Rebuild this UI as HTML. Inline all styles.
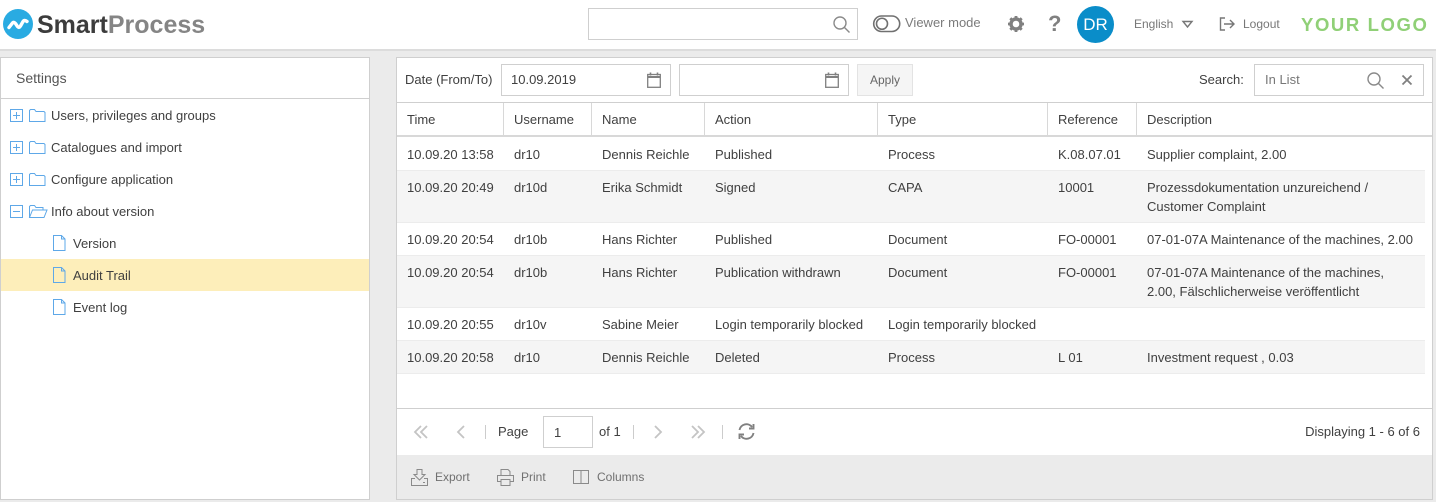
<!DOCTYPE html>
<html><head><meta charset="utf-8"><style>
html,body{margin:0;padding:0;width:1436px;height:502px;overflow:hidden;background:#ebebeb}
body{position:relative;font-family:"Liberation Sans",sans-serif;font-size:13px;color:#404040}
.a{position:absolute}
.t{position:absolute;white-space:nowrap;line-height:16px}
.b{position:absolute;box-sizing:border-box;border:1px solid #cfcfcf;background:#fff}
svg{position:absolute;overflow:visible}
.g{color:#707070}
.tc{position:absolute;white-space:nowrap;line-height:19px;color:#404040;font-size:13px}
</style></head><body>
<!-- top bar -->
<div class="a" style="left:0;top:0;width:1436px;height:49px;background:#fff"></div>
<div class="a" style="left:0;top:49px;width:1436px;height:2px;background:#dcdcdc"></div>
<svg style="left:3px;top:9px" width="30" height="30" viewBox="0 0 30 30"><circle cx="15" cy="15" r="15" fill="#29abe2"/><path d="M6 18.500 L9.500 14 Q11 12.500 12.500 14.500 L14.500 17.500 Q16 19.500 17.500 17 L20 12.500 Q21.500 10.500 24 12.500" fill="none" stroke="#fff" stroke-width="3.400" stroke-linecap="round"/></svg>
<div class="t" style="left:37px;top:10px;font-size:25px;line-height:30px;font-weight:bold;color:#3c3c3c;letter-spacing:0">Smart<span style="color:#858585">Process</span></div>

<div class="b" style="left:588px;top:8px;width:270px;height:32px"></div>
<svg style="left:833px;top:16px" width="17" height="17" viewBox="0 0 17 17" fill="none" stroke="#8a8a8a" stroke-width="1.400"><circle cx="7" cy="7" r="6"/><path d="M11.500 11.500l5 5"/></svg>
<svg style="left:873px;top:15px" width="28" height="18" viewBox="0 0 28 18" fill="none" stroke="#707070" stroke-width="1.600"><rect x=".7" y="1" width="26" height="15.500" rx="7.750"/><circle cx="9" cy="8.750" r="5.500"/></svg>
<div class="t g" style="left:905px;top:15px;color:#7b7b7b">Viewer mode</div>
<svg style="left:1008px;top:16px" width="16" height="16" viewBox="0 0 16 16"><circle cx="8" cy="8" r="5" fill="none" stroke="#808080" stroke-width="3.400"/><g stroke="#808080" stroke-width="2.800"><path d="M8 0v3M8 13v3M0 8h3M13 8h3M2.300 2.300l2.100 2.100M11.600 11.600l2.100 2.100M2.300 13.700l2.100-2.100M11.600 4.400l2.100-2.100"/></g></svg>
<div class="t" style="left:1048px;top:12px;font-size:22px;line-height:24px;font-weight:bold;color:#808080">?</div>
<div class="a" style="left:1077px;top:6px;width:37px;height:37px;border-radius:50%;background:#0a8dc9;color:#fff;font-size:17px;line-height:37px;text-align:center">DR</div>
<div class="t" style="left:1134px;top:16px;font-size:12px;color:#777">English</div>
<svg style="left:1182px;top:20px" width="11" height="9" viewBox="0 0 11 9" fill="none" stroke="#777" stroke-width="1.400"><path d="M1 1.500h9L5.500 7z"/></svg>
<svg style="left:1219px;top:17px" width="17" height="14" viewBox="0 0 17 14" fill="none" stroke="#777" stroke-width="1.400"><path d="M6 1H1.500v12H6M5 7h10M11 3l4 4-4 4"/></svg>
<div class="t" style="left:1243px;top:16px;font-size:12px;color:#777">Logout</div>
<div class="t" style="left:1301px;top:13px;font-size:18.500px;line-height:24px;font-weight:bold;color:#90d077;letter-spacing:1.600px">YOUR LOGO</div>

<!-- left panel -->
<div class="b" style="left:0;top:57px;width:370px;height:443px"></div>
<div class="a" style="left:1px;top:98px;width:368px;height:1px;background:#cfcfcf"></div>
<div class="t" style="left:16px;top:70px;font-size:14px;color:#555">Settings</div>
<svg style="left:10px;top:109px" width="14" height="14" viewBox="0 0 14 14" fill="none" stroke="#5ea8e8"><rect x=".5" y=".5" width="12" height="12"/><path d="M3 6.500h7M6.500 3v7"/></svg>
<svg style="left:29px;top:109px" width="17" height="13" viewBox="0 0 17 13" fill="none" stroke="#5ea8e8"><path d="M.5 12.500V1.500l1-1h4l1.500 2h8l1 1v9z"/></svg>
<div class="t" style="left:51px;top:108px">Users, privileges and groups</div>
<svg style="left:10px;top:141px" width="14" height="14" viewBox="0 0 14 14" fill="none" stroke="#5ea8e8"><rect x=".5" y=".5" width="12" height="12"/><path d="M3 6.500h7M6.500 3v7"/></svg>
<svg style="left:29px;top:141px" width="17" height="13" viewBox="0 0 17 13" fill="none" stroke="#5ea8e8"><path d="M.5 12.500V1.500l1-1h4l1.500 2h8l1 1v9z"/></svg>
<div class="t" style="left:51px;top:140px">Catalogues and import</div>
<svg style="left:10px;top:173px" width="14" height="14" viewBox="0 0 14 14" fill="none" stroke="#5ea8e8"><rect x=".5" y=".5" width="12" height="12"/><path d="M3 6.500h7M6.500 3v7"/></svg>
<svg style="left:29px;top:173px" width="17" height="13" viewBox="0 0 17 13" fill="none" stroke="#5ea8e8"><path d="M.5 12.500V1.500l1-1h4l1.500 2h8l1 1v9z"/></svg>
<div class="t" style="left:51px;top:172px">Configure application</div>
<svg style="left:10px;top:205px" width="14" height="14" viewBox="0 0 14 14" fill="none" stroke="#5ea8e8"><rect x=".5" y=".5" width="12" height="12"/><path d="M3 6.500h7"/></svg>
<svg style="left:29px;top:205px" width="19" height="13" viewBox="0 0 19 13" fill="none" stroke="#5ea8e8"><path d="M.5 12.500V1.500l1-1h4l1.500 2h7v2.500M.5 12.500l3-7.500h14.500l-3 7.500z"/></svg>
<div class="t" style="left:51px;top:204px">Info about version</div>
<div class="a" style="left:1px;top:259px;width:368px;height:32px;background:#fdeeba"></div>
<svg style="left:53px;top:235px" width="13" height="16" viewBox="0 0 13 16" fill="none" stroke="#5ea8e8"><path d="M.5.500h8l3.500 3.500v11.500H.5zM8.500.500V4H12"/></svg>
<div class="t" style="left:73px;top:236px">Version</div>
<svg style="left:53px;top:267px" width="13" height="16" viewBox="0 0 13 16" fill="none" stroke="#5ea8e8"><path d="M.5.500h8l3.500 3.500v11.500H.5zM8.500.500V4H12"/></svg>
<div class="t" style="left:73px;top:268px">Audit Trail</div>
<svg style="left:53px;top:299px" width="13" height="16" viewBox="0 0 13 16" fill="none" stroke="#5ea8e8"><path d="M.5.500h8l3.500 3.500v11.500H.5zM8.500.500V4H12"/></svg>
<div class="t" style="left:73px;top:300px">Event log</div>

<!-- right panel -->
<div class="b" style="left:396px;top:57px;width:1037px;height:443px"></div>
<div class="t" style="left:405px;top:72px">Date (From/To)</div>
<div class="b" style="left:501px;top:64px;width:170px;height:32px"></div>
<div class="t" style="left:511px;top:72px">10.09.2019</div>
<svg style="left:647px;top:72px" width="14" height="16" viewBox="0 0 14 16" fill="none" stroke="#808080" stroke-width="1.300"><rect x=".7" y="2.500" width="12.600" height="12.800"/><path d="M.7 5h12.600" stroke-width="2"/><path d="M3.500.5v3M10.500.5v3" stroke-width="1.600"/></svg>
<div class="b" style="left:679px;top:64px;width:170px;height:32px"></div>
<svg style="left:825px;top:72px" width="14" height="16" viewBox="0 0 14 16" fill="none" stroke="#808080" stroke-width="1.300"><rect x=".7" y="2.500" width="12.600" height="12.800"/><path d="M.7 5h12.600" stroke-width="2"/><path d="M3.500.5v3M10.500.5v3" stroke-width="1.600"/></svg>
<div class="b" style="left:857px;top:64px;width:56px;height:32px;background:#f5f5f5;border-color:#e3e3e3"></div>
<div class="t" style="left:870px;top:72px;font-size:12px;color:#666">Apply</div>
<div class="t" style="left:1199px;top:72px">Search:</div>
<div class="b" style="left:1254px;top:64px;width:170px;height:32px"></div>
<div class="t" style="left:1265px;top:72px;color:#777">In List</div>
<svg style="left:1367px;top:72px" width="17" height="17" viewBox="0 0 17 17" fill="none" stroke="#8a8a8a" stroke-width="1.400"><circle cx="7" cy="7" r="6"/><path d="M11.500 11.500l5 5"/></svg>
<svg style="left:1402px;top:75px" width="10" height="10" viewBox="0 0 10 10" fill="none" stroke="#808080" stroke-width="1.800"><path d="M.5.500l9 9M9.500.500l-9 9"/></svg>

<!-- table -->
<div class="a" style="left:397px;top:102px;width:1035px;height:1px;background:#cfcfcf"></div>
<div class="a" style="left:397px;top:135px;width:1035px;height:2px;background:#d8d8d8"></div>
<div class="a" style="left:503px;top:103px;width:1px;height:32px;background:#d8d8d8"></div>
<div class="a" style="left:591px;top:103px;width:1px;height:32px;background:#d8d8d8"></div>
<div class="a" style="left:704px;top:103px;width:1px;height:32px;background:#d8d8d8"></div>
<div class="a" style="left:877px;top:103px;width:1px;height:32px;background:#d8d8d8"></div>
<div class="a" style="left:1047px;top:103px;width:1px;height:32px;background:#d8d8d8"></div>
<div class="a" style="left:1136px;top:103px;width:1px;height:32px;background:#d8d8d8"></div>
<div class="t" style="left:407px;top:112px">Time</div>
<div class="t" style="left:514px;top:112px">Username</div>
<div class="t" style="left:602px;top:112px">Name</div>
<div class="t" style="left:715px;top:112px">Action</div>
<div class="t" style="left:888px;top:112px">Type</div>
<div class="t" style="left:1058px;top:112px">Reference</div>
<div class="t" style="left:1147px;top:112px">Description</div>

<div class="a" style="left:397px;top:170px;width:1028px;height:1px;background:#ececec"></div>
<div class="a" style="left:397px;top:171px;width:1028px;height:51px;background:#f5f5f5"></div>
<div class="a" style="left:397px;top:222px;width:1028px;height:1px;background:#ececec"></div>
<div class="a" style="left:397px;top:255px;width:1028px;height:1px;background:#ececec"></div>
<div class="a" style="left:397px;top:256px;width:1028px;height:51px;background:#f5f5f5"></div>
<div class="a" style="left:397px;top:307px;width:1028px;height:1px;background:#ececec"></div>
<div class="a" style="left:397px;top:340px;width:1028px;height:1px;background:#ececec"></div>
<div class="a" style="left:397px;top:341px;width:1028px;height:32px;background:#f5f5f5"></div>
<div class="a" style="left:397px;top:373px;width:1028px;height:1px;background:#ececec"></div>

<div class="tc" style="left:407px;top:145px">10.09.20 13:58</div><div class="tc" style="left:514px;top:145px">dr10</div><div class="tc" style="left:602px;top:145px">Dennis Reichle</div><div class="tc" style="left:715px;top:145px">Published</div><div class="tc" style="left:888px;top:145px">Process</div><div class="tc" style="left:1058px;top:145px">K.08.07.01</div><div class="tc" style="left:1147px;top:145px">Supplier complaint, 2.00</div>
<div class="tc" style="left:407px;top:178px">10.09.20 20:49</div><div class="tc" style="left:514px;top:178px">dr10d</div><div class="tc" style="left:602px;top:178px">Erika Schmidt</div><div class="tc" style="left:715px;top:178px">Signed</div><div class="tc" style="left:888px;top:178px">CAPA</div><div class="tc" style="left:1058px;top:178px">10001</div><div class="tc" style="left:1147px;top:178px">Prozessdokumentation unzureichend /<br>Customer Complaint</div>
<div class="tc" style="left:407px;top:230px">10.09.20 20:54</div><div class="tc" style="left:514px;top:230px">dr10b</div><div class="tc" style="left:602px;top:230px">Hans Richter</div><div class="tc" style="left:715px;top:230px">Published</div><div class="tc" style="left:888px;top:230px">Document</div><div class="tc" style="left:1058px;top:230px">FO-00001</div><div class="tc" style="left:1147px;top:230px">07-01-07A Maintenance of the machines, 2.00</div>
<div class="tc" style="left:407px;top:263px">10.09.20 20:54</div><div class="tc" style="left:514px;top:263px">dr10b</div><div class="tc" style="left:602px;top:263px">Hans Richter</div><div class="tc" style="left:715px;top:263px">Publication withdrawn</div><div class="tc" style="left:888px;top:263px">Document</div><div class="tc" style="left:1058px;top:263px">FO-00001</div><div class="tc" style="left:1147px;top:263px">07-01-07A Maintenance of the machines,<br>2.00, Fälschlicherweise veröffentlicht</div>
<div class="tc" style="left:407px;top:315px">10.09.20 20:55</div><div class="tc" style="left:514px;top:315px">dr10v</div><div class="tc" style="left:602px;top:315px">Sabine Meier</div><div class="tc" style="left:715px;top:315px">Login temporarily blocked</div><div class="tc" style="left:888px;top:315px">Login temporarily blocked</div>
<div class="tc" style="left:407px;top:348px">10.09.20 20:58</div><div class="tc" style="left:514px;top:348px">dr10</div><div class="tc" style="left:602px;top:348px">Dennis Reichle</div><div class="tc" style="left:715px;top:348px">Deleted</div><div class="tc" style="left:888px;top:348px">Process</div><div class="tc" style="left:1058px;top:348px">L 01</div><div class="tc" style="left:1147px;top:348px">Investment request , 0.03</div>

<!-- pager -->
<div class="a" style="left:397px;top:408px;width:1035px;height:1px;background:#cfcfcf"></div>
<svg style="left:414px;top:425px" width="14" height="14" viewBox="0 0 14 14" fill="none" stroke="#c4c4c4" stroke-width="1.800"><path d="M7 1L1 7l6 6M13 1L7 7l6 6"/></svg>
<svg style="left:456px;top:425px" width="10" height="14" viewBox="0 0 10 14" fill="none" stroke="#c4c4c4" stroke-width="1.800"><path d="M8 1L2 7l6 6"/></svg>
<div class="a" style="left:485px;top:425px;width:1px;height:14px;background:#ccc"></div>
<div class="t" style="left:498px;top:424px">Page</div>
<div class="b" style="left:543px;top:416px;width:50px;height:32px"></div>
<div class="t" style="left:554px;top:425px">1</div>
<div class="t" style="left:599px;top:424px">of 1</div>
<div class="a" style="left:633px;top:425px;width:1px;height:14px;background:#ccc"></div>
<svg style="left:653px;top:425px" width="10" height="14" viewBox="0 0 10 14" fill="none" stroke="#c4c4c4" stroke-width="1.800"><path d="M2 1l6 6-6 6"/></svg>
<svg style="left:691px;top:425px" width="14" height="14" viewBox="0 0 14 14" fill="none" stroke="#c4c4c4" stroke-width="1.800"><path d="M1 1l6 6-6 6M7 1l6 6-6 6"/></svg>
<div class="a" style="left:722px;top:425px;width:1px;height:14px;background:#ccc"></div>
<svg style="left:738px;top:423px" width="17" height="17" viewBox="0 0 17 17" fill="none" stroke="#808080" stroke-width="1.900"><path d="M1.500 7A7 7 0 0 1 14 4M15.500 10A7 7 0 0 1 3 13"/><path d="M15.500 1v4.500H11M1.500 16v-4.500H6"/></svg>
<div class="t" style="right:16px;top:424px">Displaying 1 - 6 of 6</div>

<!-- bottom bar -->
<div class="a" style="left:397px;top:455px;width:1035px;height:44px;background:#ebebeb"></div>
<svg style="left:411px;top:469px" width="17" height="17" viewBox="0 0 17 17" fill="none" stroke="#8a8a8a"><path d="M6 .5h5v5h3l-5.500 5.500L3 5.500h3zM4 9.500H.5v7h16v-7H13M12 13.500h2"/></svg>
<div class="t" style="left:435px;top:469px;font-size:12px;color:#707070">Export</div>
<svg style="left:497px;top:469px" width="17" height="17" viewBox="0 0 17 17" fill="none" stroke="#8a8a8a"><path d="M4 6.500V.5h7l2 2v4M4 12.500H.5v-6h16v6H13M4 10.500h9v6H4z"/></svg>
<div class="t" style="left:521px;top:469px;font-size:12px;color:#707070">Print</div>
<svg style="left:573px;top:470px" width="17" height="14" viewBox="0 0 17 14" fill="none" stroke="#8a8a8a"><rect x=".5" y=".5" width="15" height="13"/><path d="M8 .5v13"/></svg>
<div class="t" style="left:597px;top:469px;font-size:12px;color:#707070">Columns</div>
</body></html>
